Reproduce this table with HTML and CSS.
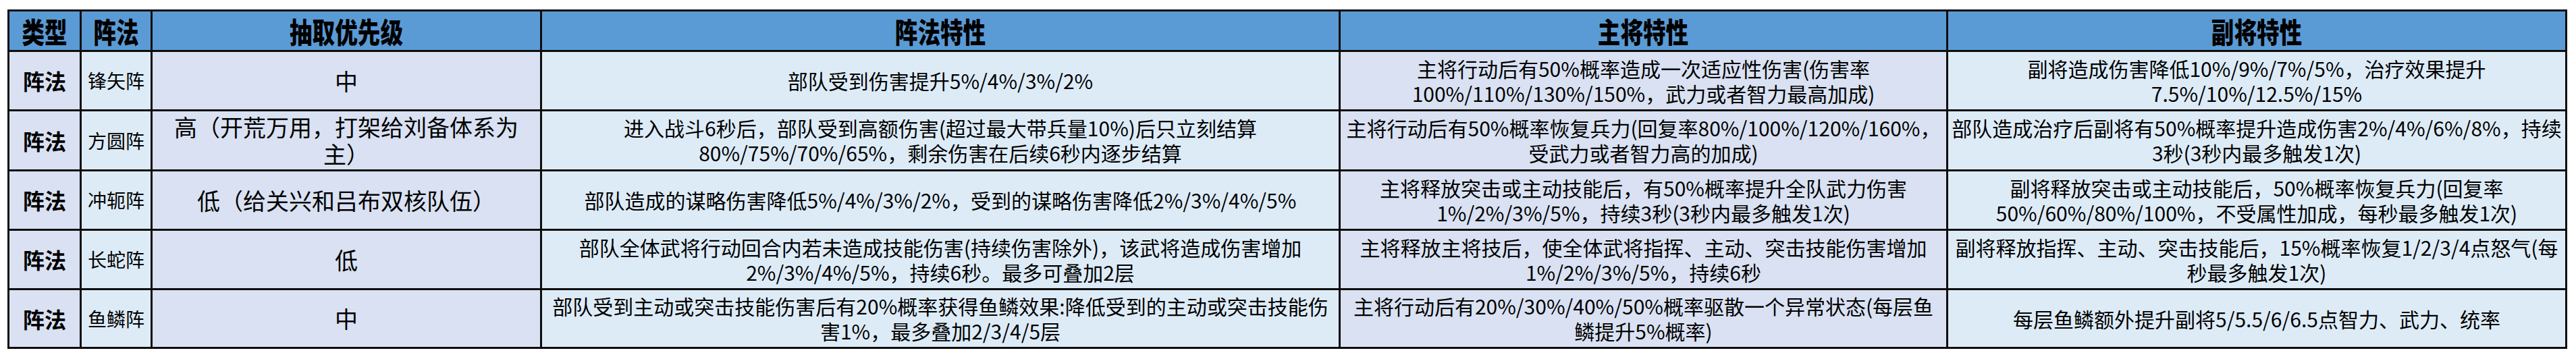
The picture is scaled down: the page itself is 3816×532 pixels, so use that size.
FILE: index.html
```html
<!DOCTYPE html>
<html lang="zh">
<head>
<meta charset="utf-8">
<title>阵法特性</title>
<link rel="stylesheet" href="styles.css">
</head>
<body>
<table class="grid">
  <colgroup>
    <col class="c-type">
    <col class="c-name">
    <col class="c-prio">
    <col class="c-feat">
    <col class="c-main">
    <col class="c-sub">
  </colgroup>
  <thead>
    <tr class="head">
      <th><span class="hd">类型</span></th>
      <th><span class="hd">阵法</span></th>
      <th><span class="hd">抽取优先级</span></th>
      <th><span class="hd">阵法特性</span></th>
      <th><span class="hd">主将特性</span></th>
      <th><span class="hd">副将特性</span></th>
    </tr>
  </thead>
  <tbody>
    <tr class="r1">
      <td class="type">阵法</td>
      <td class="name">锋矢阵</td>
      <td class="prio">中</td>
      <td class="feat">部队受到伤害提升5%/4%/3%/2%</td>
      <td class="main">主将行动后有50%概率造成一次适应性伤害(伤害率<br>100%/110%/130%/150%，武力或者智力最高加成)</td>
      <td class="sub">副将造成伤害降低10%/9%/7%/5%，治疗效果提升<br>7.5%/10%/12.5%/15%</td>
    </tr>
    <tr class="r2">
      <td class="type">阵法</td>
      <td class="name">方圆阵</td>
      <td class="prio">高（开荒万用，打架给刘备体系为<br>主）</td>
      <td class="feat">进入战斗6秒后，部队受到高额伤害(超过最大带兵量10%)后只立刻结算<br>80%/75%/70%/65%，剩余伤害在后续6秒内逐步结算</td>
      <td class="main">主将行动后有50%概率恢复兵力(回复率80%/100%/120%/160%，<br>受武力或者智力高的加成)</td>
      <td class="sub">部队造成治疗后副将有50%概率提升造成伤害2%/4%/6%/8%，持续<br>3秒(3秒内最多触发1次)</td>
    </tr>
    <tr class="r3">
      <td class="type">阵法</td>
      <td class="name">冲轭阵</td>
      <td class="prio">低（给关兴和吕布双核队伍）</td>
      <td class="feat">部队造成的谋略伤害降低5%/4%/3%/2%，受到的谋略伤害降低2%/3%/4%/5%</td>
      <td class="main">主将释放突击或主动技能后，有50%概率提升全队武力伤害<br>1%/2%/3%/5%，持续3秒(3秒内最多触发1次)</td>
      <td class="sub">副将释放突击或主动技能后，50%概率恢复兵力(回复率<br>50%/60%/80%/100%，不受属性加成，每秒最多触发1次)</td>
    </tr>
    <tr class="r4">
      <td class="type">阵法</td>
      <td class="name">长蛇阵</td>
      <td class="prio">低</td>
      <td class="feat">部队全体武将行动回合内若未造成技能伤害(持续伤害除外)，该武将造成伤害增加<br>2%/3%/4%/5%，持续6秒。最多可叠加2层</td>
      <td class="main">主将释放主将技后，使全体武将指挥、主动、突击技能伤害增加<br>1%/2%/3%/5%，持续6秒</td>
      <td class="sub">副将释放指挥、主动、突击技能后，15%概率恢复1/2/3/4点怒气(每<br>秒最多触发1次)</td>
    </tr>
    <tr class="r5">
      <td class="type">阵法</td>
      <td class="name">鱼鳞阵</td>
      <td class="prio">中</td>
      <td class="feat">部队受到主动或突击技能伤害后有20%概率获得鱼鳞效果:降低受到的主动或突击技能伤<br>害1%，最多叠加2/3/4/5层</td>
      <td class="main">主将行动后有20%/30%/40%/50%概率驱散一个异常状态(每层鱼<br>鳞提升5%概率)</td>
      <td class="sub">每层鱼鳞额外提升副将5/5.5/6/6.5点智力、武力、统率</td>
    </tr>
  </tbody>
</table>
</body>
</html>
```
FILE: styles.css
```css
html, body {
  margin: 0;
  padding: 0;
  background: #ffffff;
}

body {
  padding: 14px 0 0 11px;
  font-family: "Noto Sans CJK SC", "Noto Sans", sans-serif;
  color: #000;
}

.grid {
  border-collapse: collapse;
  table-layout: fixed;
  width: 3789px;
}

.c-type { width: 107px; }
.c-name { width: 105px; }
.c-prio { width: 577px; }
.c-feat { width: 1183px; }
.c-main { width: 900px; }
.c-sub  { width: 917px; }

.grid th,
.grid td {
  border: 3px solid #0d0d0d;
  text-align: center;
  vertical-align: middle;
  padding: 0;
  background: #d9e1f2;
  font-size: 30px;
  line-height: 37px;
  font-weight: 400;
  white-space: nowrap;
  overflow: hidden;
}

.grid td.name,
.grid td.feat,
.grid td.sub {
  background: #ddebf7;
}

.grid .head th {
  background: #5b9bd5;
  font-size: 42px;
  font-weight: 900;
  height: 57px;
  line-height: 50px;
}

.hd {
  display: inline-block;
  transform: scaleX(0.8);
  transform-origin: center;
}

.grid td.type {
  font-weight: 700;
  font-size: 32px;
}

.grid td.name {
  font-size: 28px;
}

.grid td.prio {
  font-size: 34px;
  line-height: 40px;
}

.r1 td { height: 85px; }
.r2 td { height: 86px; }
.r3 td { height: 85px; }
.r4 td { height: 85px; }
.r5 td { height: 84px; }
```
